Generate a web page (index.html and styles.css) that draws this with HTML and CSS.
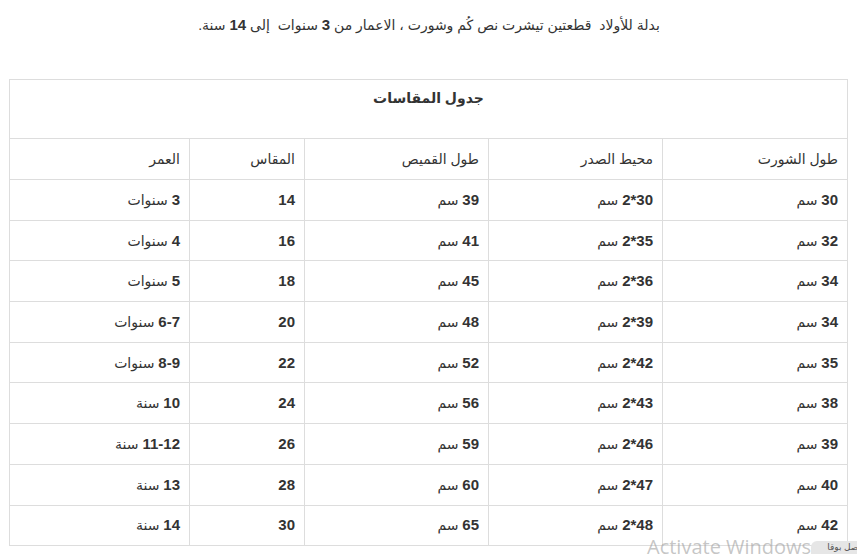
FILE: index.html
```html
<!DOCTYPE html>
<html lang="ar" dir="rtl">
<head>
<meta charset="utf-8">
<title>جدول المقاسات</title>
<link rel="stylesheet" href="styles.css">
</head>
<body>
<div class="page">
  <p class="intro">بدلة للأولاد&nbsp; قطعتين تيشرت نص كُم وشورت ، الاعمار من <b>3</b> سنوات&nbsp; إلى <b>14</b> سنة.</p>
  <table class="sizes">
    <colgroup>
      <col class="c1"><col class="c2"><col class="c3"><col class="c4"><col class="c5">
    </colgroup>
    <tr class="cap-row"><th colspan="5">جدول المقاسات</th></tr>
    <tr class="head-row">
      <td>طول الشورت</td><td>محيط الصدر</td><td>طول القميص</td><td>المقاس</td><td>العمر</td>
    </tr>
    <tr class="row"><td><b>30</b> سم</td><td><b>30*2</b> سم</td><td><b>39</b> سم</td><td><b>14</b></td><td><b>3</b> سنوات</td></tr>
    <tr class="row"><td><b>32</b> سم</td><td><b>35*2</b> سم</td><td><b>41</b> سم</td><td><b>16</b></td><td><b>4</b> سنوات</td></tr>
    <tr class="row"><td><b>34</b> سم</td><td><b>36*2</b> سم</td><td><b>45</b> سم</td><td><b>18</b></td><td><b>5</b> سنوات</td></tr>
    <tr class="row"><td><b>34</b> سم</td><td><b>39*2</b> سم</td><td><b>48</b> سم</td><td><b>20</b></td><td><b>6-7</b> سنوات</td></tr>
    <tr class="row"><td><b>35</b> سم</td><td><b>42*2</b> سم</td><td><b>52</b> سم</td><td><b>22</b></td><td><b>8-9</b> سنوات</td></tr>
    <tr class="row"><td><b>38</b> سم</td><td><b>43*2</b> سم</td><td><b>56</b> سم</td><td><b>24</b></td><td><b>10</b> سنة</td></tr>
    <tr class="row"><td><b>39</b> سم</td><td><b>46*2</b> سم</td><td><b>59</b> سم</td><td><b>26</b></td><td><b>11-12</b> سنة</td></tr>
    <tr class="row"><td><b>40</b> سم</td><td><b>47*2</b> سم</td><td><b>60</b> سم</td><td><b>28</b></td><td><b>13</b> سنة</td></tr>
    <tr class="row"><td><b>42</b> سم</td><td><b>48*2</b> سم</td><td><b>65</b> سم</td><td><b>30</b></td><td><b>14</b> سنة</td></tr>
  </table>
</div>
<div class="watermark" dir="ltr">Activate Windows</div>
<div class="tip">اصل بوقا</div>
</body>
</html>
```

FILE: styles.css
```css
html, body {
  margin: 0;
  padding: 0;
  background: #ffffff;
}
body {
  width: 857px;
  height: 554px;
  overflow: hidden;
  position: relative;
  font-family: "Liberation Sans", "DejaVu Sans", sans-serif;
  color: #333333;
}
.page {
  padding: 0 9px 0 10px;
}
.intro {
  margin: 0;
  padding-top: 16px;
  height: 79px;
  box-sizing: border-box;
  text-align: center;
  font-size: 14px;
  line-height: 18px;
  color: #333;
}
.intro b {
  font-weight: bold;
  font-size: 15px;
}
.sizes {
  width: 838px;
  border-collapse: collapse;
  table-layout: fixed;
  font-size: 14px;
  line-height: 18px;
}
.c1 { width: 185px; }
.c2 { width: 174px; }
.c3 { width: 184px; }
.c4 { width: 115px; }
.c5 { width: 180px; }
.sizes th, .sizes td {
  border: 1px solid #dddddd;
  text-align: right;
  padding: 0 9px;
  color: #333;
}
.cap-row {
  height: 59px;
}
.cap-row th {
  text-align: center;
  vertical-align: top;
  padding-top: 9px;
  font-weight: bold;
  font-size: 14px;
}
.head-row {
  height: 41px;
}
.row {
  height: 40.7px;
}
.sizes td b {
  font-size: 15px;
  font-weight: bold;
}
.watermark {
  position: absolute;
  left: 647px;
  top: 535px;
  font-family: "Open Sans", "DejaVu Sans", sans-serif;
  font-size: 20px;
  line-height: 24px;
  color: rgba(160, 160, 160, 0.6);
  white-space: nowrap;
}
.tip {
  position: absolute;
  left: 811px;
  top: 541px;
  width: 50px;
  height: 20px;
  background: #e6e6e6;
  border-radius: 6px 0 0 0;
  font-size: 9px;
  line-height: 12px;
  color: #555;
  padding-right: 4px;
  white-space: nowrap;
  overflow: hidden;
}
```
